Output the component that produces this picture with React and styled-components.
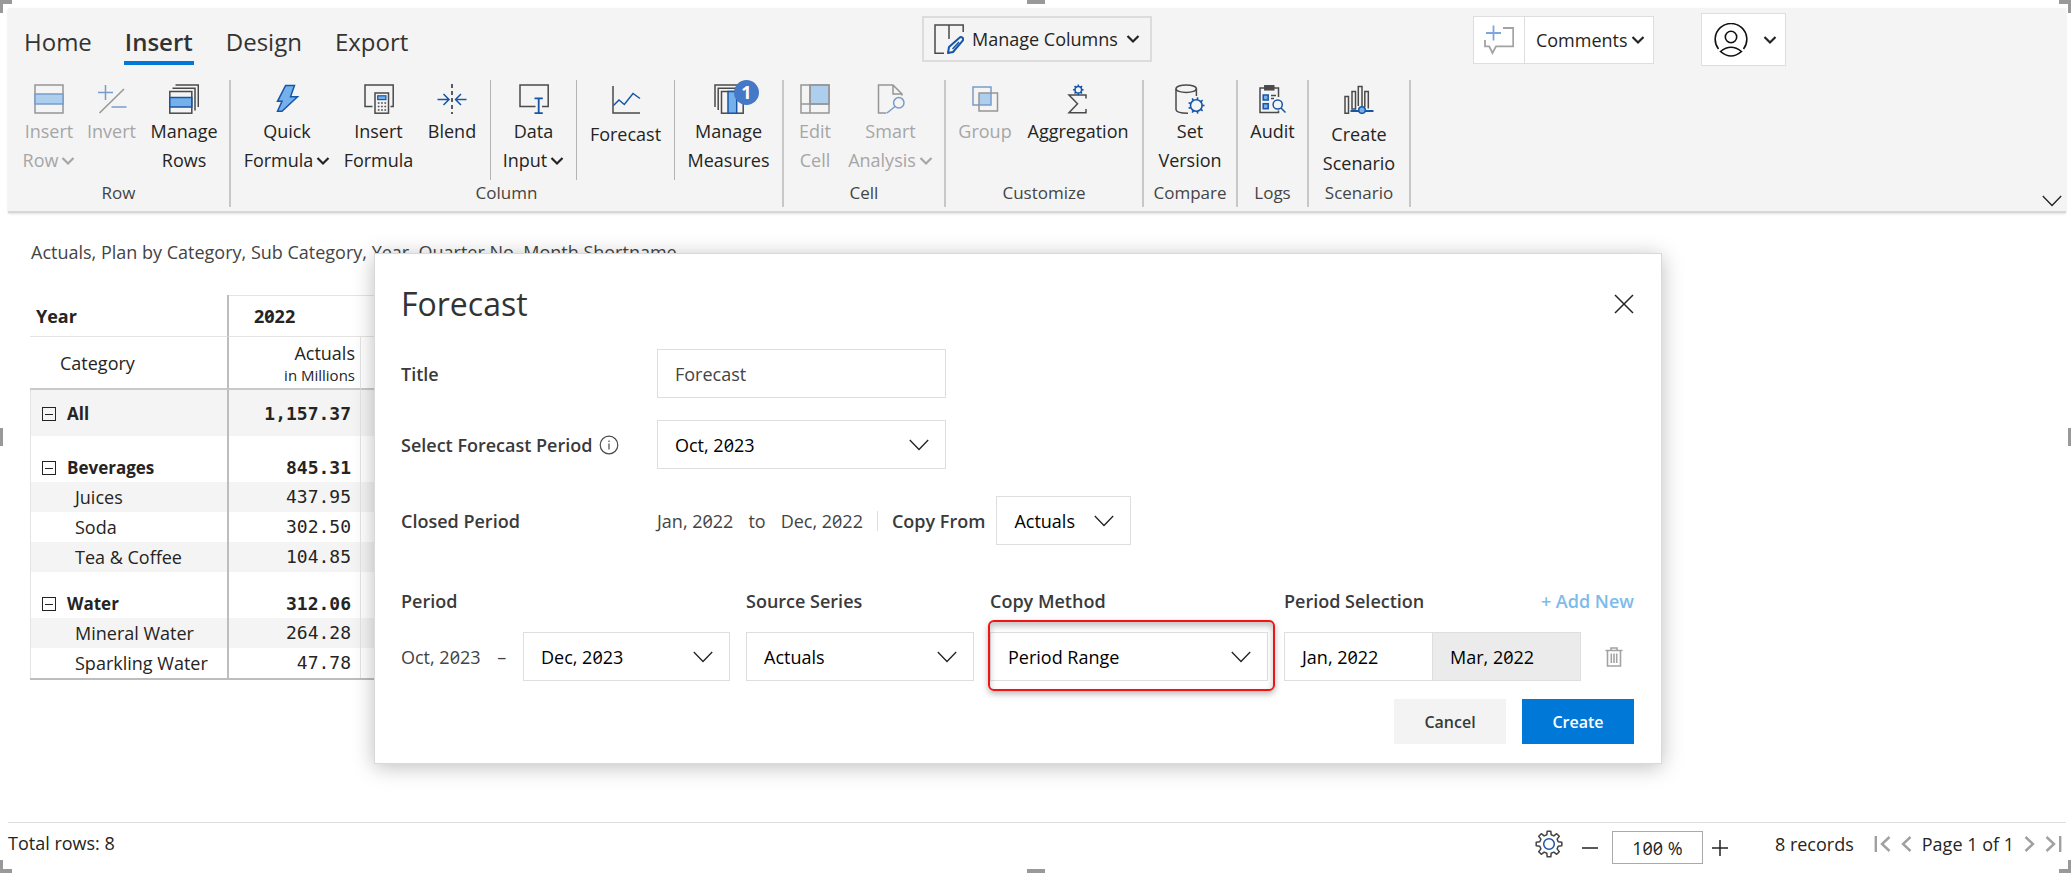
import React from 'react';
import styled, { createGlobalStyle, css } from 'styled-components';

const SANS = '"Open Sans", "Noto Sans", sans-serif';
const MONO = '"DejaVu Sans Mono", monospace';
const INK = '#252423';
const LINE = '#4a4a4a';
const BLUE = '#1556a8';
const SKY = '#75b0ea';

const GlobalStyle = createGlobalStyle`
  *, *::before, *::after { box-sizing: border-box; }
  body {
    margin: 0;
    background: #fff;
    color: ${INK};
    font-family: ${SANS};
    font-size: 18px;
    line-height: 24px;
    font-variant-numeric: slashed-zero;
  }
  button, input, select { font: inherit; font-variant-numeric: inherit; color: inherit; }
  button { border: 0; padding: 0; background: none; cursor: pointer; }
  button:disabled { cursor: default; }
  svg { display: block; flex: none; }
`;

/* ---------- page frame ---------- */

const Page = styled.div`
  position: relative;
  min-height: 100vh;
  padding: 8px 5px 0 8px;
  display: flex;
  flex-direction: column;
`;

const Handle = styled.span`
  position: absolute;
  pointer-events: none;
  color: #999;
`;
const Corner = styled(Handle)`
  width: 12px;
  height: 13px;
  border: 0 solid currentColor;
  ${p => (p.$v === 'top' ? 'top: 0; border-top-width: 4px;' : 'bottom: 0; border-bottom-width: 4px;')}
  ${p => (p.$h === 'left' ? 'left: 0; border-left-width: 3px;' : 'right: 0; border-right-width: 3px;')}
`;
const EdgeX = styled(Handle)`
  left: 50%;
  width: 18px;
  height: 4px;
  margin-left: -9px;
  background: currentColor;
  ${p => (p.$v === 'top' ? 'top: 0;' : 'bottom: 0;')}
`;
const EdgeY = styled(Handle)`
  top: 50%;
  width: 3px;
  height: 18px;
  margin-top: -9px;
  background: currentColor;
  ${p => (p.$h === 'left' ? 'left: 0;' : 'right: 0;')}
`;

/* ---------- ribbon ---------- */

const Ribbon = styled.header`
  background: #f4f4f4;
  border-bottom: 2px solid #d6d8d7;
  box-shadow: 0 1px 2px rgba(0, 0, 0, 0.12);
`;

const TopRow = styled.div`
  display: grid;
  grid-template-columns: 1fr auto 1fr;
  height: 72px;
`;

const Tabs = styled.nav`
  display: flex;
  align-items: flex-start;
  gap: 31px;
  padding: 14px 0 0 15px;
`;

const Tab = styled.button`
  padding: 0 1px;
  height: 43px;
  font-size: 24px;
  line-height: 36px;
  display: block;
  color: #333;
  border-bottom: 4px solid ${p => (p.$active ? '#0078d7' : 'transparent')};
  font-weight: ${p => (p.$active ? 600 : 400)};
`;

const ManageColumns = styled.button`
  display: flex;
  align-items: center;
  align-self: start;
  gap: 8px;
  height: 46px;
  margin-top: 8px;
  padding: 0 10px;
  border: 2px solid #dcdcdc;
  background: #f4f4f4;
`;

const TopRight = styled.div`
  display: flex;
  align-items: flex-start;
  padding-left: 321px;
`;

const CommentBox = styled.div`
  display: flex;
  height: 48px;
  margin: 8px 47px 0 0;
  background: #fff;
  border: 1px solid #dedede;
`;

const CommentAdd = styled.button`
  width: 51px;
  display: grid;
  place-items: center;
  border-right: 1px solid #dedede;
`;

const CommentMenu = styled.button`
  display: flex;
  align-items: center;
  gap: 3px;
  padding: 0 8px 0 11px;
`;

const UserMenu = styled.button`
  display: flex;
  align-items: center;
  gap: 15px;
  height: 53px;
  margin-top: 5px;
  padding: 0 8px 0 12px;
  background: #fff;
  border: 1px solid #dedede;
`;

const Groups = styled.div`
  display: flex;
  height: 131px;
  padding-bottom: 4px;
`;

const Group = styled.section`
  display: flex;
  flex-direction: column;
  border-right: 2px solid #c8c8c8;
`;

const GroupTools = styled.div`
  display: flex;
  height: 100px;
  padding: 0 ${p => p.$right || 0}px 0 ${p => p.$left || 0}px;
`;

const GroupLabel = styled.h2`
  margin: 2px 0 0;
  font-size: 17px;
  line-height: 22px;
  font-weight: 400;
  text-align: center;
  color: #444;
`;

const Tool = styled.button`
  position: relative;
  width: ${p => p.$w}px;
  padding-top: 4px;
  display: flex;
  flex-direction: column;
  align-items: center;
  gap: ${p => (p.$low ? 6 : 3)}px;
  line-height: 29px;
  color: ${INK};
  border-right: ${p => (p.$divided ? '1px solid #b4b4b4' : '0')};
  &:disabled {
    color: #a6a6a6;
    > svg { opacity: 0.55; }
  }
`;

const ToolText = styled.span`
  display: flex;
  align-items: center;
  justify-content: center;
  gap: 3px;
  white-space: nowrap;
`;

const ToolLines = styled.span`
  display: flex;
  flex-direction: column;
`;

const Badge = styled.span`
  position: absolute;
  top: 0;
  left: 59px;
  width: 25px;
  height: 25px;
  border-radius: 50%;
  background: #4678c8;
  color: #fff;
  font-weight: 700;
  line-height: 25px;
  text-align: center;
`;

const Collapse = styled.button`
  align-self: flex-end;
  margin: 0 4px 0 auto;
`;

/* ---------- report table ---------- */

const Main = styled.main`
  flex: 1;
  padding: 26px 0 0 22px;
`;

const Caption = styled.p`
  margin: 0 0 30px 1px;
  line-height: 26px;
  color: #444;
`;

const Table = styled.table`
  border-collapse: separate;
  border-spacing: 0;
  border-bottom: 2px solid #bdbdbd;
  th { text-align: left; font-weight: 400; }
`;

const YearRow = styled.tr`
  height: 42px;
  th { border-bottom: 1px solid #e4e4e4; font-weight: 700; padding: 0; }
  th:first-child { width: 199px; padding-left: 6px; border-right: 2px solid #bdbdbd; }
  th:last-child { border-top: 1px solid #e4e4e4; padding-left: 25px; }
`;

const FieldRow = styled.tr`
  height: 53px;
  th { border-bottom: 2px solid #c9c9c9; padding: 0; }
  th:nth-child(1) { padding-left: 30px; border-right: 2px solid #bdbdbd; }
  th:nth-child(2) { width: 132px; padding-right: 5px; text-align: right; border-right: 1px solid #e4e4e4; }
  th:nth-child(3) { width: 110px; }
`;

const Unit = styled.small`
  display: block;
  font-size: 15px;
  line-height: 20px;
`;

const DataRow = styled.tr`
  height: ${p => (p.$parent ? 46 : 30)}px;
  background: ${p => (p.$shade ? '#f4f4f4' : '#fff')};
  th, td {
    padding: 0 0 ${p => (p.$root ? 10 : p.$parent ? 2 : 3)}px;
    vertical-align: bottom;
    font-weight: ${p => (p.$parent ? 700 : 400)};
  }
  th {
    padding-left: ${p => (p.$parent ? 11 : 44)}px;
    border-left: 1px solid #e4e4e4;
    border-right: 2px solid #bdbdbd;
  }
  td:nth-child(2) {
    font-family: ${MONO};
    text-align: right;
    padding-right: 9px;
    border-right: 1px solid #e4e4e4;
  }
`;

const RowHead = styled.span`
  display: flex;
  align-items: center;
  gap: 11px;
  font-size: ${p => (p.$parent ? 17 : 18)}px;
`;

const Toggle = styled.button`
  width: 14px;
  height: 14px;
  border: 1px solid ${INK};
  display: grid;
  place-items: center;
  &::after { content: ''; width: 8px; height: 1px; background: ${INK}; }
`;

/* ---------- status bar ---------- */

const StatusBar = styled.footer`
  display: flex;
  align-items: flex-start;
  height: 51px;
  border-top: 1px solid #dedede;
  line-height: 40px;
`;

const StatusRight = styled.div`
  display: flex;
  align-items: center;
  margin-left: auto;
  height: 41px;
`;

const Zoom = styled.div`
  display: flex;
  align-items: center;
  gap: 8px;
  margin: 8px 46px 0 18px;
`;

const ZoomInput = styled.input`
  width: 91px;
  height: 33px;
  margin-left: 5px;
  border: 1px solid #aaa;
  background: #fff;
  text-align: center;
  padding: 0;
`;

const Pager = styled.div`
  display: flex;
  align-items: center;
  gap: 10px;
  margin: 0 4px 0 20px;
`;

/* ---------- forecast dialog ---------- */

const Dialog = styled.section`
  position: absolute;
  top: 253px;
  left: 374px;
  width: 1288px;
  padding: 28px 27px 19px 26px;
  background: #fff;
  border: 1px solid #d9d9d9;
  box-shadow: 0 3px 20px rgba(0, 0, 0, 0.26);
`;

const DialogHead = styled.div`
  display: flex;
  align-items: center;
  justify-content: space-between;
  height: 44px;
  margin-bottom: 23px;
`;

const DialogTitle = styled.h1`
  margin: 0;
  font-size: 32px;
  line-height: 44px;
  font-weight: 400;
  color: #333;
`;

const control = css`
  height: 49px;
  border: 1px solid #dedede;
  border-radius: 0;
  background: #fff;
  padding: 0 17px;
`;

const Field = styled.div`
  display: flex;
  align-items: center;
  height: 49px;
  margin-bottom: ${p => p.$gap}px;
`;

const FieldName = styled.div`
  display: flex;
  align-items: center;
  gap: 7px;
  width: 256px;
`;

const labelText = css`
  font-size: 18px;
  font-weight: 600;
  color: #3a3a3a;
  white-space: nowrap;
`;
const Label = styled.label`${labelText}`;
const Heading = styled.span`${labelText}`;

const TextInput = styled.input`
  ${control}
  width: 289px;
  color: #444;
`;

const SelectShell = styled.div`
  display: grid;
  align-items: center;
  width: ${p => (p.$w ? p.$w + 'px' : 'auto')};
  flex: ${p => (p.$w ? 'none' : 1)};
  > * { grid-area: 1 / 1; }
  svg { justify-self: end; margin-right: 17px; pointer-events: none; }
`;

const NativeSelect = styled.select`
  ${control}
  width: 100%;
  appearance: none;
  color: #000;
`;

const Muted = styled.span`
  color: #444;
  white-space: pre;
`;

const Range = styled.div`
  display: flex;
  gap: 15px;
  padding-right: 14px;
  margin-right: 14px;
  line-height: 20px;
  border-right: 1px solid #dedede;
`;

const CopyFrom = styled.div`
  display: flex;
  align-items: center;
  gap: 11px;
`;

const Rules = styled.div`
  display: grid;
  grid-template-columns: 329px 228px 278px 297px 1fr;
  column-gap: 16px;
  align-items: center;
`;

const RulesHead = styled(Rules)`
  height: 24px;
  margin-bottom: 19px;
`;

const RulesEnd = styled.div`
  grid-column: 4 / 6;
  display: flex;
  justify-content: space-between;
`;

const AddNew = styled.button`
  ${labelText}
  color: #7dbbea;
`;

const PeriodCell = styled.div`
  display: flex;
  align-items: center;
  justify-content: space-between;
`;

const Highlighted = styled.div`
  position: relative;
  &::after {
    content: '';
    position: absolute;
    inset: -12px -7px -10px -2px;
    border: 2px solid #f01414;
    border-radius: 6px;
    box-shadow: 0 3px 6px rgba(0, 0, 0, 0.28), inset 0 4px 6px rgba(0, 0, 0, 0.24);
    pointer-events: none;
  }
`;

const Segments = styled.div`
  display: flex;
`;

const Segment = styled.button`
  ${control}
  flex: 1;
  text-align: left;
  color: #000;
  background: ${p => (p.$on ? '#ebebeb' : '#fff')};
  & + & { border-left: 0; }
`;

const Trash = styled.button`
  justify-self: start;
  padding-left: 8px;
`;

const Actions = styled.div`
  display: flex;
  justify-content: flex-end;
  gap: 16px;
  margin-top: 18px;
`;

const Action = styled.button`
  width: 112px;
  height: 45px;
  font-size: 16px;
  font-weight: 600;
  color: ${p => (p.$primary ? '#fff' : '#3a3a3a')};
  background: ${p => (p.$primary ? '#0078d7' : '#f3f3f3')};
`;

/* ---------- icons ---------- */

const Icon = ({ size = 30, w, h, children, color = LINE, sw = 1.5, ...rest }) => (
  <svg width={w || size} height={h || size} viewBox={`0 0 ${w || size} ${h || size}`} fill="none"
    stroke={color} strokeWidth={sw} aria-hidden="true" {...rest}>{children}</svg>
);

const Caret = () => (
  <Icon w={14} h={10} color="currentColor" sw={2.2}><path d="M1.5 2L7 7.5L12.5 2" /></Icon>
);
const Chevron = () => (
  <Icon w={20} h={12} color="#222" sw={1.3}><path d="M.8 1L10 10.5L19.2 1" /></Icon>
);

const Gear = ({ x, y, r, teeth = 8, len = 2.2, sw = 1.6 }) => (
  <g stroke={BLUE} strokeWidth={sw}>
    <circle cx={x} cy={y} r={r} fill="#f4f4f4" />
    {Array.from({ length: teeth }, (_, i) => {
      const a = (i * 2 * Math.PI) / teeth;
      return <line key={i} x1={x + Math.cos(a) * r} y1={y + Math.sin(a) * r}
        x2={x + Math.cos(a) * (r + len)} y2={y + Math.sin(a) * (r + len)} />;
    })}
  </g>
);

const icons = {
  insertRow: (
    <Icon><rect x="1" y="1" width="28" height="28" /><rect x="1" y="10" width="28" height="10" fill={SKY} stroke={BLUE} /></Icon>
  ),
  invert: (
    <Icon><path d="M2.5 29L27 5" /><path d="M1 8.5h15M8.5 1v15M14.5 23H29.5" stroke={BLUE} /></Icon>
  ),
  manageRows: (
    <Icon>
      <path d="M6.5 1H29.3V23M3.5 4.2H26V26.5" />
      <rect x=".8" y="7.5" width="22" height="21.7" />
      <rect x=".8" y="13.5" width="22" height="9.5" fill={SKY} stroke={BLUE} />
    </Icon>
  ),
  quick: (
    <Icon><path d="M13.6 1.5H22.5L18.5 12.8H25.5L10 27.2H5.5L10 17.3H5.5z" fill={SKY} stroke={BLUE} /></Icon>
  ),
  insertFormula: (
    <Icon>
      <path d="M8.5 22.5H1V1H29.2V22.5H26.5" />
      <rect x="11" y="9" width="13.5" height="20.2" />
      <rect x="13.7" y="11.8" width="8.2" height="3.8" fill={SKY} stroke={BLUE} strokeWidth="1.2" />
      <path d="M13.8 19h8.5M13.8 22.5h8.5M13.8 26h8.5" strokeDasharray="1.7 1.6" strokeWidth="1.7" />
    </Icon>
  ),
  blend: (
    <Icon>
      <path d="M15 0V30" strokeDasharray="4 3" strokeWidth="1.8" />
      <path d="M.5 15.5H12M6.5 10l5.5 5.5L6.5 21M29.5 15.5H18.5M24 10l-5.5 5.5L24 21" stroke={BLUE} />
    </Icon>
  ),
  dataInput: (
    <Icon>
      <path d="M16.5 22.5H1V1H29.2V22.5H23" />
      <path d="M15.5 14.3h8.3M15.5 29.2h8.3M19.7 14.3V29.2" stroke={BLUE} strokeWidth="1.8" />
    </Icon>
  ),
  forecast: (
    <Icon><path d="M2 2V29H29" /><path d="M2.5 21.5L8 16L13.3 20.5L22 9.5L29 14.5" stroke={BLUE} /></Icon>
  ),
  measures: (
    <Icon>
      <path d="M1 23V1H24M4.2 26V4.2H27" />
      <rect x="7.5" y="7.5" width="21.7" height="21.7" />
      <rect x="14" y="7.5" width="8.7" height="21.7" fill={SKY} stroke={BLUE} />
    </Icon>
  ),
  editCell: (
    <Icon>
      <rect x="10" y="1" width="19" height="19" fill={SKY} />
      <path d="M1 1H29V29H1zM10 1V29M1 20H29" />
    </Icon>
  ),
  smart: (
    <Icon>
      <path d="M10.5 29H2.5V1H17L26 10V11.5M17 1V10H26" />
      <circle cx="22.8" cy="18.8" r="5.2" stroke={BLUE} /><path d="M19 22.5L11 29" stroke={BLUE} />
    </Icon>
  ),
  group: (
    <Icon>
      <rect x="9" y="9" width="12" height="12" fill={SKY} stroke="none" />
      <rect x="3" y="3" width="18" height="18" stroke={BLUE} /><rect x="9" y="9" width="18.5" height="18" />
    </Icon>
  ),
  aggregation: (
    <Icon>
      <path d="M23 14.5V11H6L14.5 19.8L6 28.8H23V25" />
      <Gear x={15.3} y={5.8} r={3.3} len={2} sw={1.5} />
    </Icon>
  ),
  version: (
    <Icon>
      <ellipse cx="11.2" cy="4.7" rx="10.2" ry="3.8" />
      <path d="M1 4.7V25.5C1 28 6 29.2 13 29.2M21.4 4.7V12" />
      <Gear x={21.3} y={21.5} r={5.8} len={2.4} teeth={9} />
    </Icon>
  ),
  audit: (
    <Icon>
      <path d="M20.5 13V4H2V28.5H20.5V26.5" />
      <rect x="6.8" y="1.8" width="9" height="4" fill={LINE} />
      <rect x="5.2" y="11" width="5" height="5" fill={SKY} stroke={BLUE} />
      <rect x="5.2" y="19.7" width="5" height="5" fill={SKY} stroke={BLUE} />
      <path d="M13 11.5h5M13 14.5h3" />
      <circle cx="19.7" cy="20.5" r="4.6" stroke={BLUE} fill="#f4f4f4" /><path d="M23 24l4.5 4.5" stroke={BLUE} />
    </Icon>
  ),
  scenario: (
    <Icon>
      <path d="M1 12.5h3.5V29.2H1zM11.5 25H8V7.5h3.5zM14.3 22V2.5h3.7V22M20.8 23V7.5h3.5V24.5" />
      <path d="M6.5 27H29.5" stroke={BLUE} strokeWidth="2" /><circle cx="18" cy="26" r="3.3" fill={SKY} stroke={BLUE} />
    </Icon>
  ),
  columns: (
    <Icon>
      <path d="M10 29.2H1V1H29.2V8M15 1V15" />
      <path d="M14 29l1-6L25.5 13.8a2 2 0 0 1 3 3L19 28z" stroke={BLUE} strokeWidth="2" strokeLinejoin="round" />
      <path d="M18.5 25L25 18" stroke={BLUE} strokeWidth="1.5" />
    </Icon>
  ),
  comment: (
    <Icon color="#a3a3a3" sw={1.8}>
      <path d="M19 3H29.2V21.3H12L8.5 28L5.2 21.3H1V15" />
      <path d="M2 8h15M9.5 .5V15.5" stroke="#7fa6da" />
    </Icon>
  ),
  user: (
    <Icon size={34} color="#111" sw={1.6}>
      <path d="M4.5 26A15.8 15.8 0 1 1 29.5 26" /><circle cx="17" cy="14" r="5.7" />
      <path d="M6.5 28.5Q17 20 27.5 28.5Q17 37.5 6.5 28.5z" />
    </Icon>
  ),
  settings: (
    <Icon size={28} color="#444" sw={1.5}>
      <path strokeLinejoin="round" d="M11.8 4.8L12.2 1.2H15.8L16.2 4.8L18.9 5.9L21.7 3.7L24.3 6.3L22.1 9.1L23.2 11.8L26.8 12.2V15.8L23.2 16.2L22.1 18.9L24.3 21.7L21.7 24.3L18.9 22.1L16.2 23.2L15.8 26.8H12.2L11.8 23.2L9.1 22.1L6.3 24.3L3.7 21.7L5.9 18.9L4.8 16.2L1.2 15.8V12.2L4.8 11.8L5.9 9.1L3.7 6.3L6.3 3.7L9.1 5.9z" />
      <circle cx="14" cy="14" r="5.3" stroke={BLUE} />
    </Icon>
  ),
  info: (
    <Icon size={20} sw={1.2}><circle cx="10" cy="10" r="8.8" /><path d="M10 8.5V14.5M10 5.5V7" /></Icon>
  ),
  close: (
    <Icon size={20} color="#222" sw={1.5}><path d="M1 1L19 19M19 1L1 19" /></Icon>
  ),
  trash: (
    <Icon w={18} h={20} color="#a3a3a3" sw={1.6}>
      <path d="M.5 3.5H17.5M6 3.5V1H12V3.5M2.5 3.5V19H15.5V3.5M6.3 6.5V16M9 6.5V16M11.7 6.5V16" />
    </Icon>
  ),
  first: <Icon w={17} h={18} color="#a0a0a0" sw={2.4}><path d="M1.8 1V17M15.5 2L8 9l7.5 7" /></Icon>,
  prev: <Icon w={11} h={18} color="#a0a0a0" sw={2.4}><path d="M9.5 2L2 9l7.5 7" /></Icon>,
  next: <Icon w={11} h={18} color="#a0a0a0" sw={2.4}><path d="M1.5 2L9 9l-7.5 7" /></Icon>,
  last: <Icon w={17} h={18} color="#a0a0a0" sw={2.4}><path d="M1.5 2L9 9l-7.5 7M15.2 1V17" /></Icon>,
};

/* ---------- content ---------- */

const groups = [
  { label: 'Row', left: 6, tools: [
    { icon: 'insertRow', text: ['Insert', 'Row'], w: 70, menu: true, off: true },
    { icon: 'invert', text: ['Invert'], w: 55, off: true },
    { icon: 'manageRows', text: ['Manage', 'Rows'], w: 90 },
  ] },
  { label: 'Column', tools: [
    { icon: 'quick', text: ['Quick', 'Formula'], w: 112, menu: true },
    { icon: 'insertFormula', text: ['Insert', 'Formula'], w: 71 },
    { icon: 'blend', text: ['Blend'], w: 77, divided: true },
    { icon: 'dataInput', text: ['Data', 'Input'], w: 86, menu: true, divided: true },
    { icon: 'forecast', text: ['Forecast'], w: 98, low: true, divided: true },
    { icon: 'measures', text: ['Manage', 'Measures'], w: 107, badge: '1' },
  ] },
  { label: 'Cell', right: 9, tools: [
    { icon: 'editCell', text: ['Edit', 'Cell'], w: 62, off: true },
    { icon: 'smart', text: ['Smart', 'Analysis'], w: 89, menu: true, off: true },
  ] },
  { label: 'Customize', right: 10, tools: [
    { icon: 'group', text: ['Group'], w: 78, off: true },
    { icon: 'aggregation', text: ['Aggregation'], w: 108 },
  ] },
  { label: 'Compare', tools: [{ icon: 'version', text: ['Set', 'Version'], w: 92 }] },
  { label: 'Logs', tools: [{ icon: 'audit', text: ['Audit'], w: 69 }] },
  { label: 'Scenario', tools: [{ icon: 'scenario', text: ['Create', 'Scenario'], w: 100, low: true }] },
];

const rows = [
  { name: 'All', value: '1,157.37', parent: true, root: true, shade: true },
  { name: 'Beverages', value: '845.31', parent: true },
  { name: 'Juices', value: '437.95', shade: true },
  { name: 'Soda', value: '302.50' },
  { name: 'Tea & Coffee', value: '104.85', shade: true },
  { name: 'Water', value: '312.06', parent: true },
  { name: 'Mineral Water', value: '264.28', shade: true },
  { name: 'Sparkling Water', value: '47.78' },
];

function ToolButton({ t }) {
  return (
    <Tool $w={t.w} $low={t.low} $divided={t.divided} disabled={t.off}>
      {icons[t.icon]}
      <ToolLines>
        {t.text.map((line, i) => (
          <ToolText key={line}>{line}{t.menu && i === t.text.length - 1 && <Caret />}</ToolText>
        ))}
      </ToolLines>
      {t.badge && <Badge>{t.badge}</Badge>}
    </Tool>
  );
}

function Select({ w, value, ...rest }) {
  return (
    <SelectShell $w={w}>
      <NativeSelect defaultValue={value} {...rest}><option>{value}</option></NativeSelect>
      <Chevron />
    </SelectShell>
  );
}

function ForecastDialog() {
  return (
    <Dialog role="dialog" aria-labelledby="dialog-title">
      <DialogHead>
        <DialogTitle id="dialog-title">Forecast</DialogTitle>
        <button aria-label="Close">{icons.close}</button>
      </DialogHead>
      <Field $gap={22}>
        <FieldName><Label htmlFor="title">Title</Label></FieldName>
        <TextInput id="title" defaultValue="Forecast" />
      </Field>
      <Field $gap={27}>
        <FieldName><Label htmlFor="start">Select Forecast Period</Label>{icons.info}</FieldName>
        <Select id="start" w={289} value="Oct, 2023" />
      </Field>
      <Field $gap={44}>
        <FieldName><Heading>Closed Period</Heading></FieldName>
        <Range><Muted>Jan, 2022</Muted><Muted>to</Muted><Muted>Dec, 2022</Muted></Range>
        <CopyFrom>
          <Label htmlFor="copy-from">Copy From</Label>
          <Select id="copy-from" w={135} value="Actuals" />
        </CopyFrom>
      </Field>
      <RulesHead>
        <Label htmlFor="period">Period</Label>
        <Label htmlFor="source">Source Series</Label>
        <Label htmlFor="method">Copy Method</Label>
        <RulesEnd><Heading>Period Selection</Heading><AddNew>+ Add New</AddNew></RulesEnd>
      </RulesHead>
      <Rules>
        <PeriodCell>
          <Muted>Oct, 2023</Muted><Muted>–</Muted>
          <Select id="period" w={207} value="Dec, 2023" />
        </PeriodCell>
        <Select id="source" value="Actuals" />
        <Highlighted><Select id="method" value="Period Range" /></Highlighted>
        <Segments><Segment>Jan, 2022</Segment><Segment $on>Mar, 2022</Segment></Segments>
        <Trash aria-label="Delete">{icons.trash}</Trash>
      </Rules>
      <Actions>
        <Action>Cancel</Action>
        <Action $primary>Create</Action>
      </Actions>
    </Dialog>
  );
}

export default function App() {
  return (
    <>
      <GlobalStyle />
      <Page>
        <Ribbon>
          <TopRow>
            <Tabs>
              {['Home', 'Insert', 'Design', 'Export'].map(t => (
                <Tab key={t} $active={t === 'Insert'}>{t}</Tab>
              ))}
            </Tabs>
            <ManageColumns>{icons.columns}Manage Columns<Caret /></ManageColumns>
            <TopRight>
              <CommentBox>
                <CommentAdd aria-label="Add comment">{icons.comment}</CommentAdd>
                <CommentMenu>Comments<Caret /></CommentMenu>
              </CommentBox>
              <UserMenu aria-label="Account">{icons.user}<Caret /></UserMenu>
            </TopRight>
          </TopRow>
          <Groups>
            {groups.map(g => (
              <Group key={g.label}>
                <GroupTools $left={g.left} $right={g.right}>
                  {g.tools.map(t => <ToolButton key={t.icon} t={t} />)}
                </GroupTools>
                <GroupLabel>{g.label}</GroupLabel>
              </Group>
            ))}
            <Collapse aria-label="Collapse ribbon"><Chevron /></Collapse>
          </Groups>
        </Ribbon>

        <Main>
          <Caption>Actuals, Plan by Category, Sub Category, Year, Quarter No, Month Shortname</Caption>
          <Table>
            <thead>
              <YearRow><th>Year</th><th colSpan={2}>2022</th></YearRow>
              <FieldRow><th>Category</th><th>Actuals<Unit>in Millions</Unit></th><th /></FieldRow>
            </thead>
            <tbody>
              {rows.map(r => (
                <DataRow key={r.name} $parent={r.parent} $root={r.root} $shade={r.shade}>
                  <th scope="row">
                    <RowHead $parent={r.parent}>
                      {r.parent && <Toggle aria-label={`Collapse ${r.name}`} />}{r.name}
                    </RowHead>
                  </th>
                  <td>{r.value}</td>
                  <td />
                </DataRow>
              ))}
            </tbody>
          </Table>
        </Main>

        <StatusBar>
          <span>Total rows: 8</span>
          <StatusRight>
            <button aria-label="Settings">{icons.settings}</button>
            <Zoom>
              <button aria-label="Zoom out"><Icon size={18} color="#222"><path d="M1 9H17" /></Icon></button>
              <ZoomInput aria-label="Zoom level" defaultValue="100 %" />
              <button aria-label="Zoom in"><Icon size={18} color="#222"><path d="M1 9H17M9 1V17" /></Icon></button>
            </Zoom>
            <span>8 records</span>
            <Pager>
              <button aria-label="First page">{icons.first}</button>
              <button aria-label="Previous page">{icons.prev}</button>
              <span>Page 1 of 1</span>
              <button aria-label="Next page">{icons.next}</button>
              <button aria-label="Last page">{icons.last}</button>
            </Pager>
          </StatusRight>
        </StatusBar>

        <ForecastDialog />

        <Corner $v="top" $h="left" /><Corner $v="top" $h="right" />
        <Corner $v="bottom" $h="left" /><Corner $v="bottom" $h="right" />
        <EdgeX $v="top" /><EdgeX $v="bottom" />
        <EdgeY $h="left" /><EdgeY $h="right" />
      </Page>
    </>
  );
}
